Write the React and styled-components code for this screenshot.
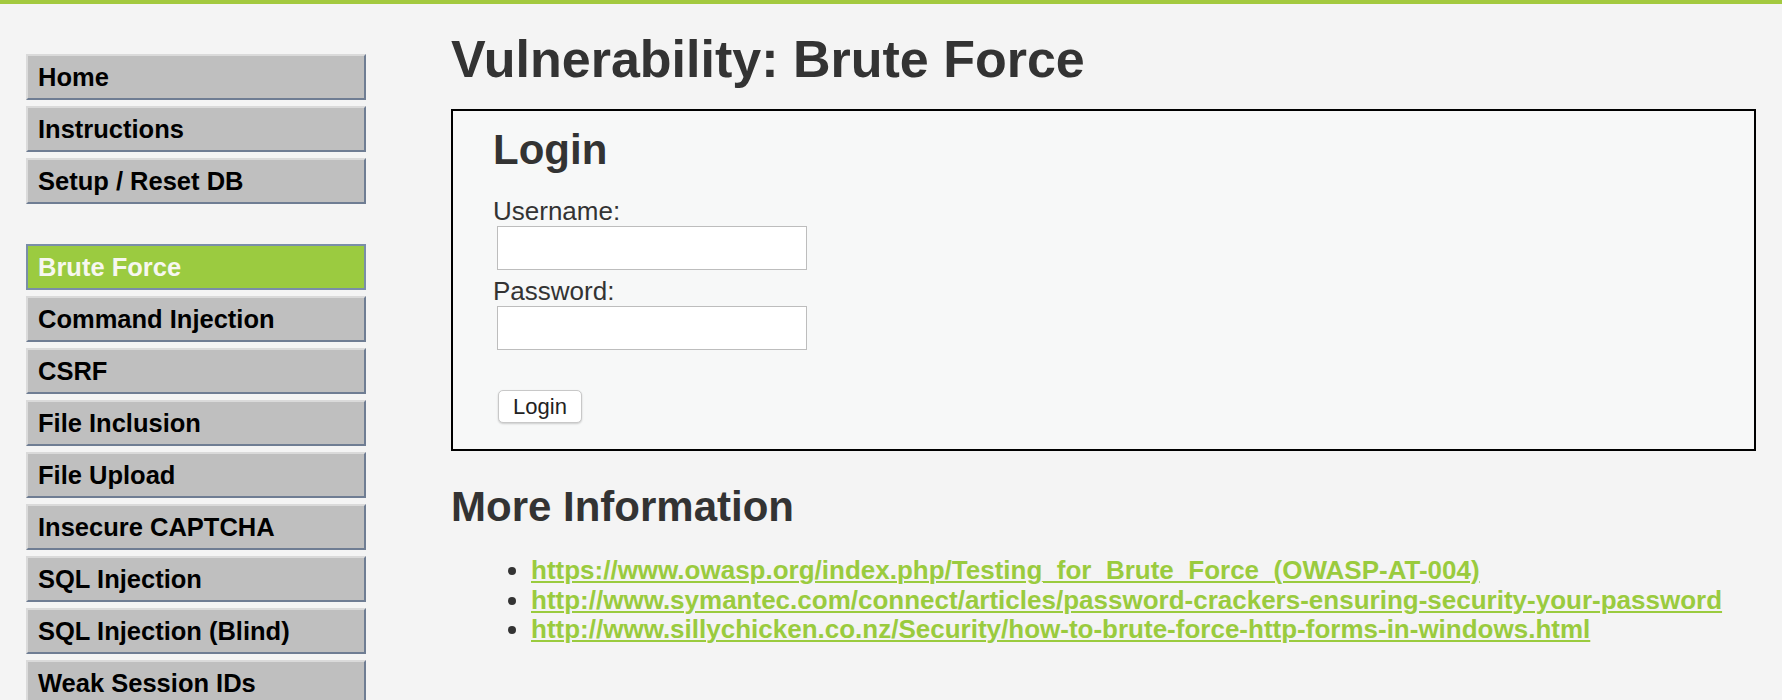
import styled, { createGlobalStyle } from 'styled-components';

const GlobalStyle = createGlobalStyle`
  html, body {
    margin: 0;
    padding: 0;
    background: #f4f4f4;
  }
  body {
    font-family: "Liberation Sans", Arial, sans-serif;
    color: #333;
    border-top: 4px solid #a3c93f;
  }
`;

const menuGroups = [
  ['Home', 'Instructions', 'Setup / Reset DB'],
  [
    'Brute Force',
    'Command Injection',
    'CSRF',
    'File Inclusion',
    'File Upload',
    'Insecure CAPTCHA',
    'SQL Injection',
    'SQL Injection (Blind)',
    'Weak Session IDs',
  ],
];

const links = [
  'https://www.owasp.org/index.php/Testing_for_Brute_Force_(OWASP-AT-004)',
  'http://www.symantec.com/connect/articles/password-crackers-ensuring-security-your-password',
  'http://www.sillychicken.co.nz/Security/how-to-brute-force-http-forms-in-windows.html',
];

const App = () => {
  return (
    <>
      <GlobalStyle />
      <Page>
        <Sidebar>
          {menuGroups.map((group, gi) => (
            <MenuList key={gi}>
              {group.map((item) => (
                <MenuItem key={item} selected={item === 'Brute Force'}>
                  {item}
                </MenuItem>
              ))}
            </MenuList>
          ))}
        </Sidebar>

        <Main>
          <Title>Vulnerability: Brute Force</Title>

          <LoginBox>
            <SubTitle>Login</SubTitle>
            <Field>
              <Label>Username:</Label>
              <TextInput type="text" />
            </Field>
            <Field>
              <Label>Password:</Label>
              <TextInput type="password" />
            </Field>
            <SubmitButton type="button">Login</SubmitButton>
          </LoginBox>

          <InfoTitle>More Information</InfoTitle>
          <LinkList>
            {links.map((url) => (
              <li key={url}>
                <InfoLink href={url}>{url}</InfoLink>
              </li>
            ))}
          </LinkList>
        </Main>
      </Page>
    </>
  );
};

const Page = styled.div`
  display: flex;
  align-items: flex-start;
  gap: 85px;
  padding: 0 26px;
  height: 696px;
  overflow: hidden;
`;

const Sidebar = styled.nav`
  flex: 0 0 340px;
  padding-top: 50px;
  display: flex;
  flex-direction: column;
  gap: 40px;
`;

const MenuList = styled.ul`
  list-style: none;
  margin: 0;
  padding: 0;
  display: flex;
  flex-direction: column;
  gap: 6px;
`;

const MenuItem = styled.li`
  box-sizing: border-box;
  height: 46px;
  line-height: 42px;
  padding-left: 10px;
  font-size: 25.5px;
  font-weight: bold;
  border: 2px solid;
  border-color: #dadada #6f7d93 #6f7d93 #dadada;
  background: #bfbfbf;
  color: #000;
  white-space: nowrap;

  ${(p) =>
    p.selected &&
    `
    background: #9bcb40;
    color: #f7f7f0;
    border-color: #7a8ea8;
  `}
`;

const Main = styled.main`
  flex: 1;
  min-width: 0;
`;

const Title = styled.h1`
  margin: 25px 0 20px;
  font-size: 52px;
  font-weight: bold;
  line-height: normal;
  color: #333;
`;

const LoginBox = styled.div`
  border: 2px solid #000;
  background: #f7f8f8;
  padding: 15px 40px 26px;
`;

const SubTitle = styled.h3`
  margin: 0 0 22px;
  font-size: 42px;
  font-weight: bold;
  line-height: normal;
  color: #333;
`;

const Field = styled.div`
  display: flex;
  flex-direction: column;
  align-items: flex-start;
  margin-bottom: 6px;
`;

const Label = styled.label`
  font-size: 26px;
  line-height: 30px;
  color: #333;
`;

const TextInput = styled.input`
  box-sizing: border-box;
  width: 310px;
  height: 44px;
  margin-left: 4px;
  border: 1px solid #bdbdbd;
  background: #fff;
  padding: 0 6px;
  font-size: 22px;
  font-family: inherit;
  outline: none;
`;

const SubmitButton = styled.button`
  box-sizing: border-box;
  display: block;
  margin: 40px 0 0 5px;
  width: 84px;
  height: 33px;
  padding: 0;
  border: 1px solid #c8c8c8;
  border-radius: 5px;
  background: #fff;
  box-shadow: 0 1px 2px rgba(0, 0, 0, 0.18);
  font-family: inherit;
  font-size: 22px;
  color: #222;
`;

const InfoTitle = styled.h3`
  margin: 32px 0 25px;
  font-size: 42px;
  font-weight: bold;
  line-height: normal;
  color: #333;
`;

const LinkList = styled.ul`
  margin: 0;
  padding-left: 80px;
  font-size: 26px;
  line-height: 29.5px;
  color: #333;
`;

const InfoLink = styled.a`
  color: #9acb3e;
  font-weight: bold;
  text-decoration: underline;
  text-decoration-thickness: 2px;
  text-underline-offset: 2px;
`;

export default App;
